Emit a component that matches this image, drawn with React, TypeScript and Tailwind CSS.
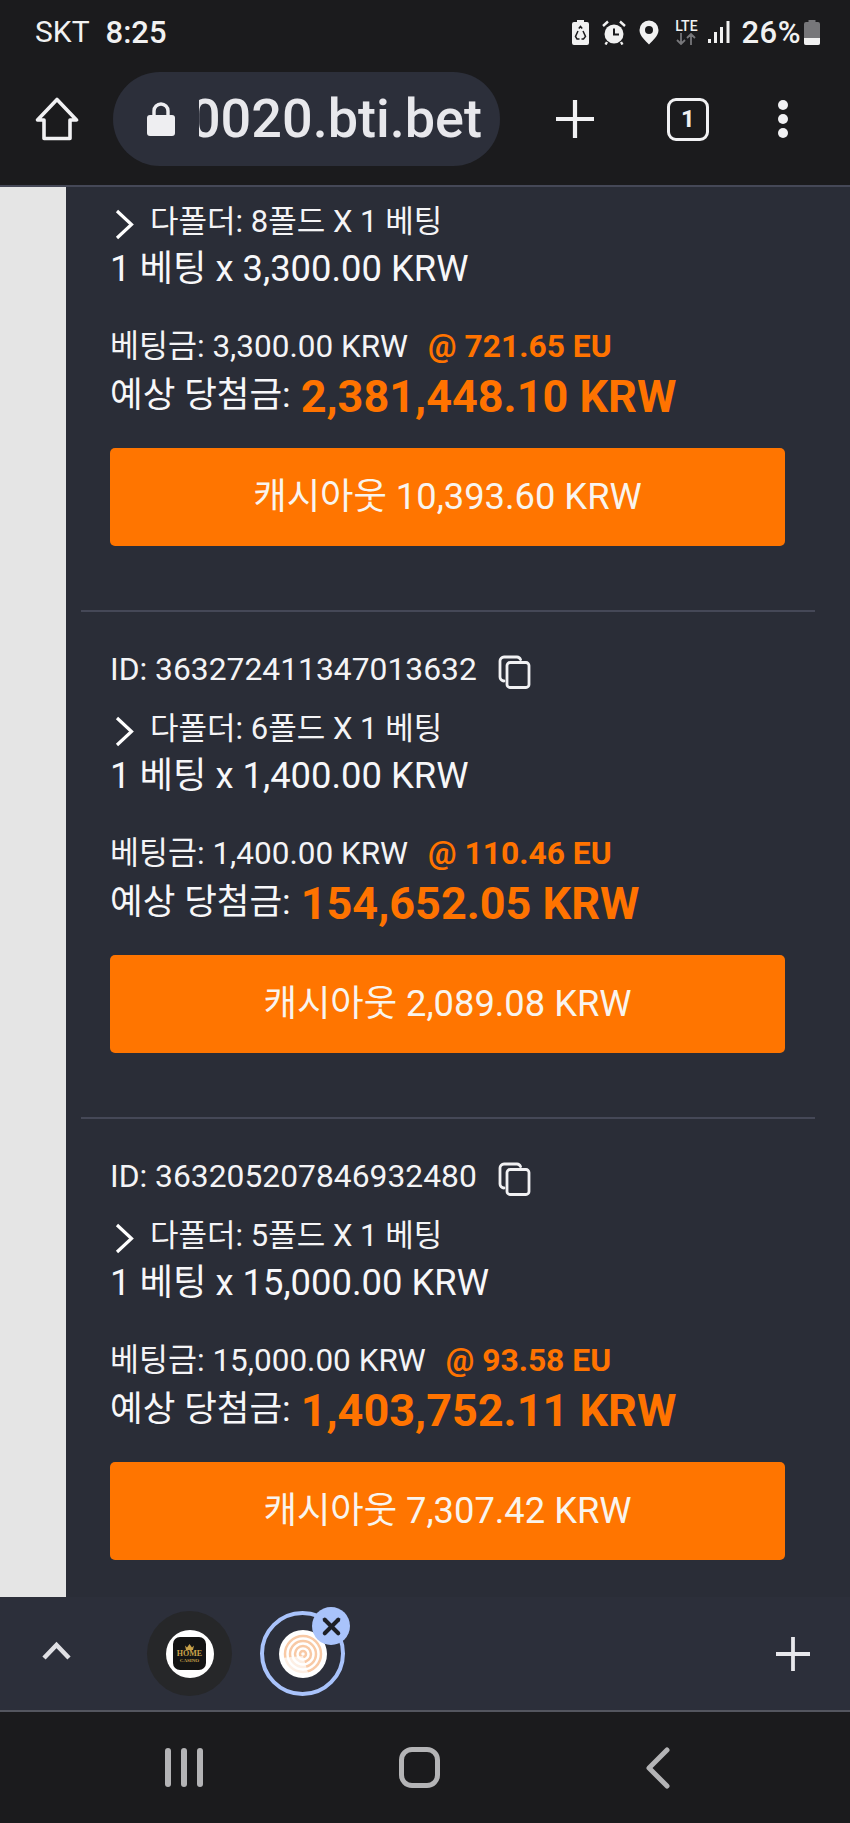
import { X } from 'lucide-react';

const FONT = "font-['Roboto','Noto_Sans_CJK_KR',sans-serif]";

const bets = [
  {
    id: null,
    folds: '8폴드 X 1 베팅',
    unit: '3,300.00 KRW',
    odds: '@ 721.65 EU',
    win: '2,381,448.10 KRW',
    cashout: '캐시아웃 10,393.60 KRW',
  },
  {
    id: '363272411347013632',
    folds: '6폴드 X 1 베팅',
    unit: '1,400.00 KRW',
    odds: '@ 110.46 EU',
    win: '154,652.05 KRW',
    cashout: '캐시아웃 2,089.08 KRW',
  },
  {
    id: '363205207846932480',
    folds: '5폴드 X 1 베팅',
    unit: '15,000.00 KRW',
    odds: '@ 93.58 EU',
    win: '1,403,752.11 KRW',
    cashout: '캐시아웃 7,307.42 KRW',
  },
];

function PlusIcon({ size, color, className }: { size: number; color: string; className?: string }) {
  return (
    <svg className={className} width={size} height={size} viewBox="0 0 36 36" fill="none" stroke={color} strokeWidth="4">
      <path d="M18 0V36M0 18H36" />
    </svg>
  );
}

function CopyIcon() {
  return (
    <svg width="33" height="34" viewBox="0 0 33 34" fill="none" stroke="#f1f1f3" strokeWidth="2.8" strokeLinejoin="round" strokeLinecap="round">
      <path d="M6 26 a4 4 0 0 1 -4 -4 V6 a4 4 0 0 1 4 -4 h13 a4 4 0 0 1 3.500 2.500" />
      <rect x="9" y="7.500" width="22" height="25" rx="3" />
    </svg>
  );
}

function StatusIcons() {
  return (
    <div className="flex items-center">
      {/* battery saver */}
      <svg width="17" height="25" viewBox="0 0 17 25" fill="#f1f1f1">
        <path d="M5 0h7v2h3a2 2 0 0 1 2 2v19a2 2 0 0 1-2 2H2a2 2 0 0 1-2-2V4a2 2 0 0 1 2-2h3z" />
        <path d="M6.800 8.500 L8.500 6.500 L10.200 8.500 M11 11 L13.500 16.500 L11.500 19 H9.500 M7.500 19 H5 L3.500 16.500 L6 11" fill="none" stroke="#1b1b1d" strokeWidth="1.500" />
      </svg>
      {/* alarm */}
      <svg className="ml-[13px]" width="24" height="25" viewBox="0 0 24 25" fill="none">
        <circle cx="12" cy="14" r="9.500" fill="#f1f1f1" />
        <path d="M12 8.500V14.500H17" stroke="#1b1b1d" strokeWidth="2" />
        <path d="M1 6 L6 1.500 M23 6 L18 1.500 M5 22 L3.500 24.500 M19 22 L20.500 24.500" stroke="#f1f1f1" strokeWidth="2.400" />
      </svg>
      {/* location */}
      <svg className="ml-[13px]" width="20" height="25" viewBox="0 0 20 25">
        <path d="M10 0.500a9.500 9.500 0 0 1 9.500 9.500c0 6-6 10.500-9.500 14.500C6.500 20.500 0.500 16 0.500 10A9.500 9.500 0 0 1 10 0.500z" fill="#f1f1f1" />
        <circle cx="10" cy="10" r="4" fill="#1b1b1d" />
      </svg>
      {/* LTE */}
      <div className="ml-[14px] flex flex-col items-center w-[26px]">
        <span className="text-[14px] leading-[14px] font-medium text-[#f1f1f1]">LTE</span>
        <svg width="22" height="12" viewBox="0 0 22 12" fill="none" stroke="#77777a" strokeWidth="1.800">
          <path d="M6 0v11M2 7l4 4 4-4M16 12V1M12 5l4-4 4 4" />
        </svg>
      </div>
      {/* signal */}
      <svg className="ml-[9px]" width="22" height="24" viewBox="0 0 22 24" fill="#f1f1f1">
        <rect x="0" y="19" width="3" height="4" />
        <rect x="6" y="12" width="3" height="11" />
        <rect x="12" y="7" width="3" height="16" />
        <rect x="18.500" y="1" width="3" height="22" />
      </svg>
      <span className="ml-[11px] text-[31px] leading-none font-medium tracking-[0.5px] text-[#f1f1f1]">26%</span>
      {/* battery */}
      <svg className="ml-[3px]" width="16" height="25" viewBox="0 0 16 25">
        <path d="M4.500 0h7v2H14a2 2 0 0 1 2 2v19a2 2 0 0 1-2 2H2a2 2 0 0 1-2-2V4a2 2 0 0 1 2-2h2.500z" fill="#77777a" />
        <path d="M0 18h16v5a2 2 0 0 1-2 2H2a2 2 0 0 1-2-2z" fill="#f1f1f1" />
      </svg>
    </div>
  );
}

function BetCard({ bet, last }: { bet: (typeof bets)[number]; last: boolean }) {
  return (
    <div className={last ? 'px-[29px]' : 'px-[29px] pb-[64px] border-b-[2px] border-[#454857]'}>
      {bet.id && (
        <div className="flex items-center h-[34px] mt-[41px] text-[31.8px] leading-none text-[#f4f4f6]">
          <span>ID: {bet.id}</span>
          <span className="ml-[21px] mt-[3px]"><CopyIcon /></span>
        </div>
      )}
      <div className={bet.id ? 'flex items-center h-[40px] mt-[21px]' : 'flex items-center h-[40px] mt-[14px]'}>
        <svg className="ml-[5px] mt-[6px]" width="19" height="31" viewBox="0 0 19 31" fill="none" stroke="#ffffff" strokeWidth="3.200">
          <path d="M2 2 L16.500 15.500 L2 29" />
        </svg>
        <span className="ml-[16px] text-[31px] leading-none text-[#f4f4f6]">다폴더: {bet.folds}</span>
      </div>
      <div className="mt-[8px] h-[40px] flex items-center text-[36.4px] leading-none text-[#f7f7f9]">
        1 베팅 x {bet.unit}
      </div>
      <div className="mt-[38px] h-[40px] flex items-center leading-none text-[#f4f4f6]">
        <span className="text-[31.5px]">베팅금: {bet.unit}</span>
        <span className="ml-[20px] text-[31.8px] font-bold text-[#ff7300]">{bet.odds}</span>
      </div>
      <div className="mt-[4px] h-[50px] flex items-center leading-none">
        <span className="text-[35.5px] text-[#f7f7f9]">예상 당첨금:</span>
        <span className="ml-[10px] text-[45px] font-bold text-[#ff7300]">{bet.win}</span>
      </div>
      <button className="mt-[27px] w-[675px] h-[98px] rounded-[5px] bg-[#ff7500] text-[36.3px] text-[#f9f4ee] flex items-center justify-center">
        {bet.cashout}
      </button>
    </div>
  );
}

export default function App() {
  return (
    <div className={`${FONT} w-[850px] h-[1823px] flex flex-col overflow-hidden bg-[#1b1b1d]`}>
      {/* status bar */}
      <div className="h-[56px] pt-[8px] pl-[35px] pr-[30px] flex items-center justify-between shrink-0">
        <div className="flex items-center text-[#f1f1f1] text-[30px] leading-none">
          <span>SKT</span>
          <span className="ml-[16px] text-[31px] font-medium">8:25</span>
        </div>
        <StatusIcons />
      </div>

      {/* browser toolbar */}
      <div className="h-[131px] pb-[3px] flex items-center border-b-[2px] border-[#454857] shrink-0">
        <svg className="ml-[35px]" width="44" height="44" viewBox="0 0 44 44" fill="none" stroke="#f1f1f3" strokeWidth="3.600" strokeLinejoin="round">
          <path d="M22 2.500 L41.500 23 H35 V41.500 H9 V23 H2.500 Z" />
        </svg>
        <div className="ml-[34px] w-[387px] h-[94px] rounded-full bg-[#2c2f3a] flex items-center shrink-0">
          <svg className="ml-[34px] shrink-0" width="28" height="34" viewBox="0 0 28 34">
            <path d="M7 15V9a7 7 0 0 1 14 0v6" fill="none" stroke="#eeeef1" strokeWidth="3.400" />
            <rect x="0" y="13" width="28" height="21" rx="3" fill="#eeeef1" />
          </svg>
          <div className="ml-[24px] w-[283px] shrink-0 overflow-hidden flex justify-end">
            <span className="text-[54px] leading-[64px] font-medium text-[#e8e8ec] whitespace-nowrap">0020.bti.bet</span>
          </div>
        </div>
        <PlusIcon size={38} color="#f1f1f3" className="ml-[56px]" />
        <div className="ml-[73px] w-[42px] h-[43px] rounded-[9px] border-[3.500px] border-[#f1f1f3] flex items-center justify-center text-[#f1f1f3] text-[24px] font-bold leading-none">
          1
        </div>
        <div className="ml-[69px] flex flex-col gap-[4px]">
          <div className="w-[10px] h-[10px] rounded-full bg-[#f1f1f3]" />
          <div className="w-[10px] h-[10px] rounded-full bg-[#f1f1f3]" />
          <div className="w-[10px] h-[10px] rounded-full bg-[#f1f1f3]" />
        </div>
      </div>

      {/* page */}
      <div className="flex-1 flex min-h-0 overflow-hidden bg-[#2a2d37]">
        <div className="w-[66px] bg-[#e5e5e5] shrink-0" />
        <div className="w-[734px] ml-[15px] flex flex-col">
          {bets.map((bet, i) => (
            <BetCard key={i} bet={bet} last={i === bets.length - 1} />
          ))}
        </div>
      </div>

      {/* tab strip */}
      <div className="h-[115px] shrink-0 bg-[#2c2f3a] border-b-[2px] border-[#54565f] flex items-center">
        <svg className="ml-[42px] mb-[6px]" width="29" height="19" viewBox="0 0 29 19" fill="none" stroke="#e0e0e4" strokeWidth="4.500">
          <path d="M2 17 L14.500 4 L27 17" />
        </svg>
        <div className="ml-[76px] w-[85px] h-[85px] rounded-full bg-[#262729] flex items-center justify-center">
          <div className="w-[48px] h-[48px] rounded-full bg-white flex items-center justify-center">
            <div className="w-[33px] h-[33px] rounded-[7px] bg-[#141414] flex flex-col items-center justify-center text-[#c9a24a] font-['Liberation_Serif',serif]">
              <svg width="9" height="6" viewBox="0 0 9 6" fill="#c9a24a">
                <path d="M0 1.500 L2 3.500 L4.500 0 L7 3.500 L9 1.500 L8 6 H1 Z" />
              </svg>
              <span className="text-[8px] leading-[8px] font-bold">HOME</span>
              <span className="text-[5px] leading-[6px] font-bold">CASINO</span>
            </div>
          </div>
        </div>
        <div className="relative ml-[28px] w-[85px] h-[85px] rounded-full border-[4px] border-[#a9c3fb] flex items-center justify-center">
          <svg width="48" height="48" viewBox="0 0 48 48" className="shrink-0">
            <circle cx="24" cy="24" r="24" fill="#ffffff" />
            <g fill="none" stroke="#f8c9a5" strokeWidth="2.500">
              <circle cx="24" cy="24" r="3" />
              <circle cx="24" cy="24" r="8" />
              <circle cx="24" cy="24" r="13" />
              <circle cx="24" cy="24" r="18" />
            </g>
            <path d="M2 28 A 22 22 0 0 0 30 46 L 24 26 Z" fill="#ffffff" opacity="0.7" />
          </svg>
          <div className="absolute -top-[8px] -right-[9px] w-[38px] h-[38px] rounded-full bg-[#a9c3fb] flex items-center justify-center">
            <X size={27} strokeWidth={3.600} color="#1d1f26" />
          </div>
        </div>
        <PlusIcon size={34} color="#e8e8ec" className="ml-auto mr-[40px]" />
      </div>

      {/* android nav */}
      <div className="h-[111px] shrink-0 bg-[#1b1b1d] flex items-center">
        <div className="ml-[165px] flex gap-[10px]">
          <div className="w-[6px] h-[39px] rounded-full bg-[#b4b4b6]" />
          <div className="w-[6px] h-[39px] rounded-full bg-[#b4b4b6]" />
          <div className="w-[6px] h-[39px] rounded-full bg-[#b4b4b6]" />
        </div>
        <div className="ml-[196px] w-[41px] h-[41px] rounded-[13px] border-[5px] border-[#b4b4b6]" />
        <svg className="ml-[205px]" width="26" height="42" viewBox="0 0 26 42" fill="none" stroke="#b4b4b6" strokeWidth="5" strokeLinecap="round" strokeLinejoin="round">
          <path d="M22 3 L4 21 L22 39" />
        </svg>
      </div>
    </div>
  );
}
